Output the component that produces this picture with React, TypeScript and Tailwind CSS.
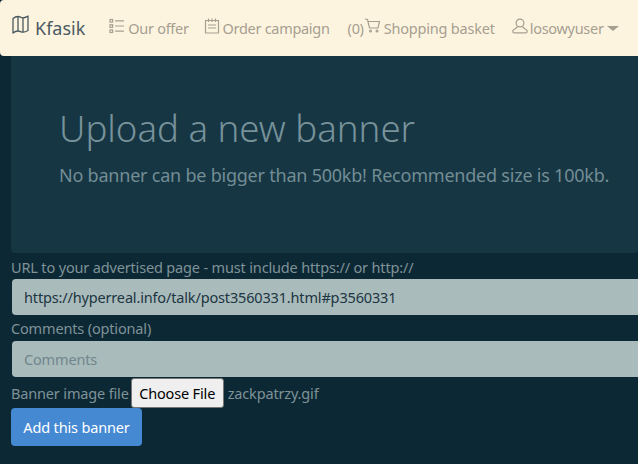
import React from "react";

function MapIcon() {
  return (
    <svg width="17" height="19" viewBox="0 0 17 19" fill="none" stroke="#4a5a62" strokeWidth="1.3" strokeLinejoin="round" className="mr-[6px] -mt-[7px] shrink-0">
      <path d="M1 3.5C2.5 2.2 4 1.5 6 1.5 8 1.5 9 2.8 11 2.8 13 2.8 14.5 1.8 16 1V15.5C14.5 16.5 13 17.2 11 17.2 9 17.2 8 16 6 16 4 16 2.5 16.8 1 18Z" />
      <path d="M6 1.5V16M11 2.8V17.2" />
    </svg>
  );
}
function ListIcon() {
  return (
    <svg width="16" height="16" viewBox="0 0 16 16" fill="none" stroke="#a69f90" strokeWidth="1.2" className="shrink-0 -mt-1">
      <rect x="1" y="1.5" width="2.6" height="2.6" />
      <rect x="1" y="6.7" width="2.6" height="2.6" />
      <rect x="1" y="11.9" width="2.6" height="2.6" />
      <path d="M6 2.8H15M6 8H15M6 13.2H15" />
    </svg>
  );
}
function ClipIcon() {
  return (
    <svg width="16" height="16" viewBox="0 0 16 16" fill="none" stroke="#a69f90" strokeWidth="1.2" className="shrink-0 -mt-1">
      <path d="M1.5 2.5H14.5V15H1.5Z" />
      <path d="M4.5 0.5V4M8 0.5V4M11.5 0.5V4M4 7H12M4 10H12" />
    </svg>
  );
}
function CartIcon() {
  return (
    <svg width="17" height="16" viewBox="0 0 16 16" fill="none" stroke="#a69f90" strokeWidth="1.2" className="shrink-0 -mt-1">
      <path d="M0.5 1 3 1.5 5 10H13.5L15 3.5H4" />
      <circle cx="6" cy="13" r="0.9" />
      <circle cx="12.5" cy="13" r="0.9" />
    </svg>
  );
}
function UserIcon() {
  return (
    <svg width="16" height="16" viewBox="0 0 16 16" fill="none" stroke="#a69f90" strokeWidth="1.2" className="shrink-0 -mt-1">
      <circle cx="8" cy="5" r="3.9" />
      <path d="M5.5 8.5C5 10.5 1.5 11 0.8 13 0.6 14 1 14.8 2 14.8H14C15 14.8 15.4 14 15.2 13 14.5 11 11 10.5 10.5 8.5" />
    </svg>
  );
}

export default function App() {
  return (
    <div className="w-[638px] h-[464px] overflow-hidden bg-[#0c2835] font-['Noto_Sans',sans-serif] text-[14.5px] tracking-[-0.16px] text-[#7f9297] leading-[22px]">
      <nav className="h-[56px] bg-[#fdf4e0] rounded-l-[4px] flex items-center pl-3 whitespace-nowrap text-[#a69f90] tracking-[-0.3px]">
        <span className="flex items-center text-[#4a5a62] text-[18px] tracking-normal mr-[24px]"><MapIcon />Kfasik</span>
        <span className="flex items-center gap-[3px] mr-[15px]"><ListIcon />Our offer</span>
        <span className="flex items-center gap-[3px] mr-[18px]"><ClipIcon />Order campaign</span>
        <span className="flex items-center mr-[17px]">(0)<CartIcon /><span className="ml-[3px] tracking-[-0.2px]">Shopping basket</span></span>
        <span className="flex items-center gap-[2px]"><UserIcon />losowyuser<span className="ml-[1px] w-0 h-0 border-x-[6px] border-x-transparent border-t-[5px] border-t-[#a69f90]" /></span>
      </nav>
      <section className="ml-[11px] h-[197px] bg-[#163644] rounded-b-[4px] pl-[48px] pt-[48px]">
        <h1 className="text-[36.6px] tracking-normal leading-[48px] text-[#78929a] font-light whitespace-nowrap">Upload a new banner</h1>
        <p className="text-[18px] tracking-[-0.22px] leading-[27px] mt-[10px] text-[#738d94] whitespace-nowrap">No banner can be bigger than 500kb! Recommended size is 100kb.</p>
      </section>
      <form className="pl-[11px] pt-[3px]">
        <label className="block h-[23px] whitespace-nowrap">URL to your advertised page - must include https:// or http://</label>
        <div className="ml-px h-9 bg-[#a9bbbb] rounded-l-[4px] flex items-center pl-3 text-[#1c3542] whitespace-nowrap">https://hyperreal.info/talk/post3560331.html#p3560331</div>
        <label className="block h-[26px] pt-[2px] whitespace-nowrap">Comments (optional)</label>
        <div className="ml-px h-9 bg-[#a9bbbb] rounded-l-[4px] flex items-center pl-3 text-[#71868c]">Comments</div>
        <div className="flex items-center mt-[1px] h-[30px] whitespace-nowrap">
          <span>Banner image file</span>
          <button type="button" className="ml-[2px] mr-1 h-[30px] w-[93px] bg-[#efefef] border border-[#767676] rounded-[3px] text-black">Choose File</button>
          <span>zackpatrzy.gif</span>
        </div>
        <button type="button" className="h-[38px] w-[131px] bg-[#4589d3] rounded-[4px] text-white">Add this banner</button>
      </form>
    </div>
  );
}
